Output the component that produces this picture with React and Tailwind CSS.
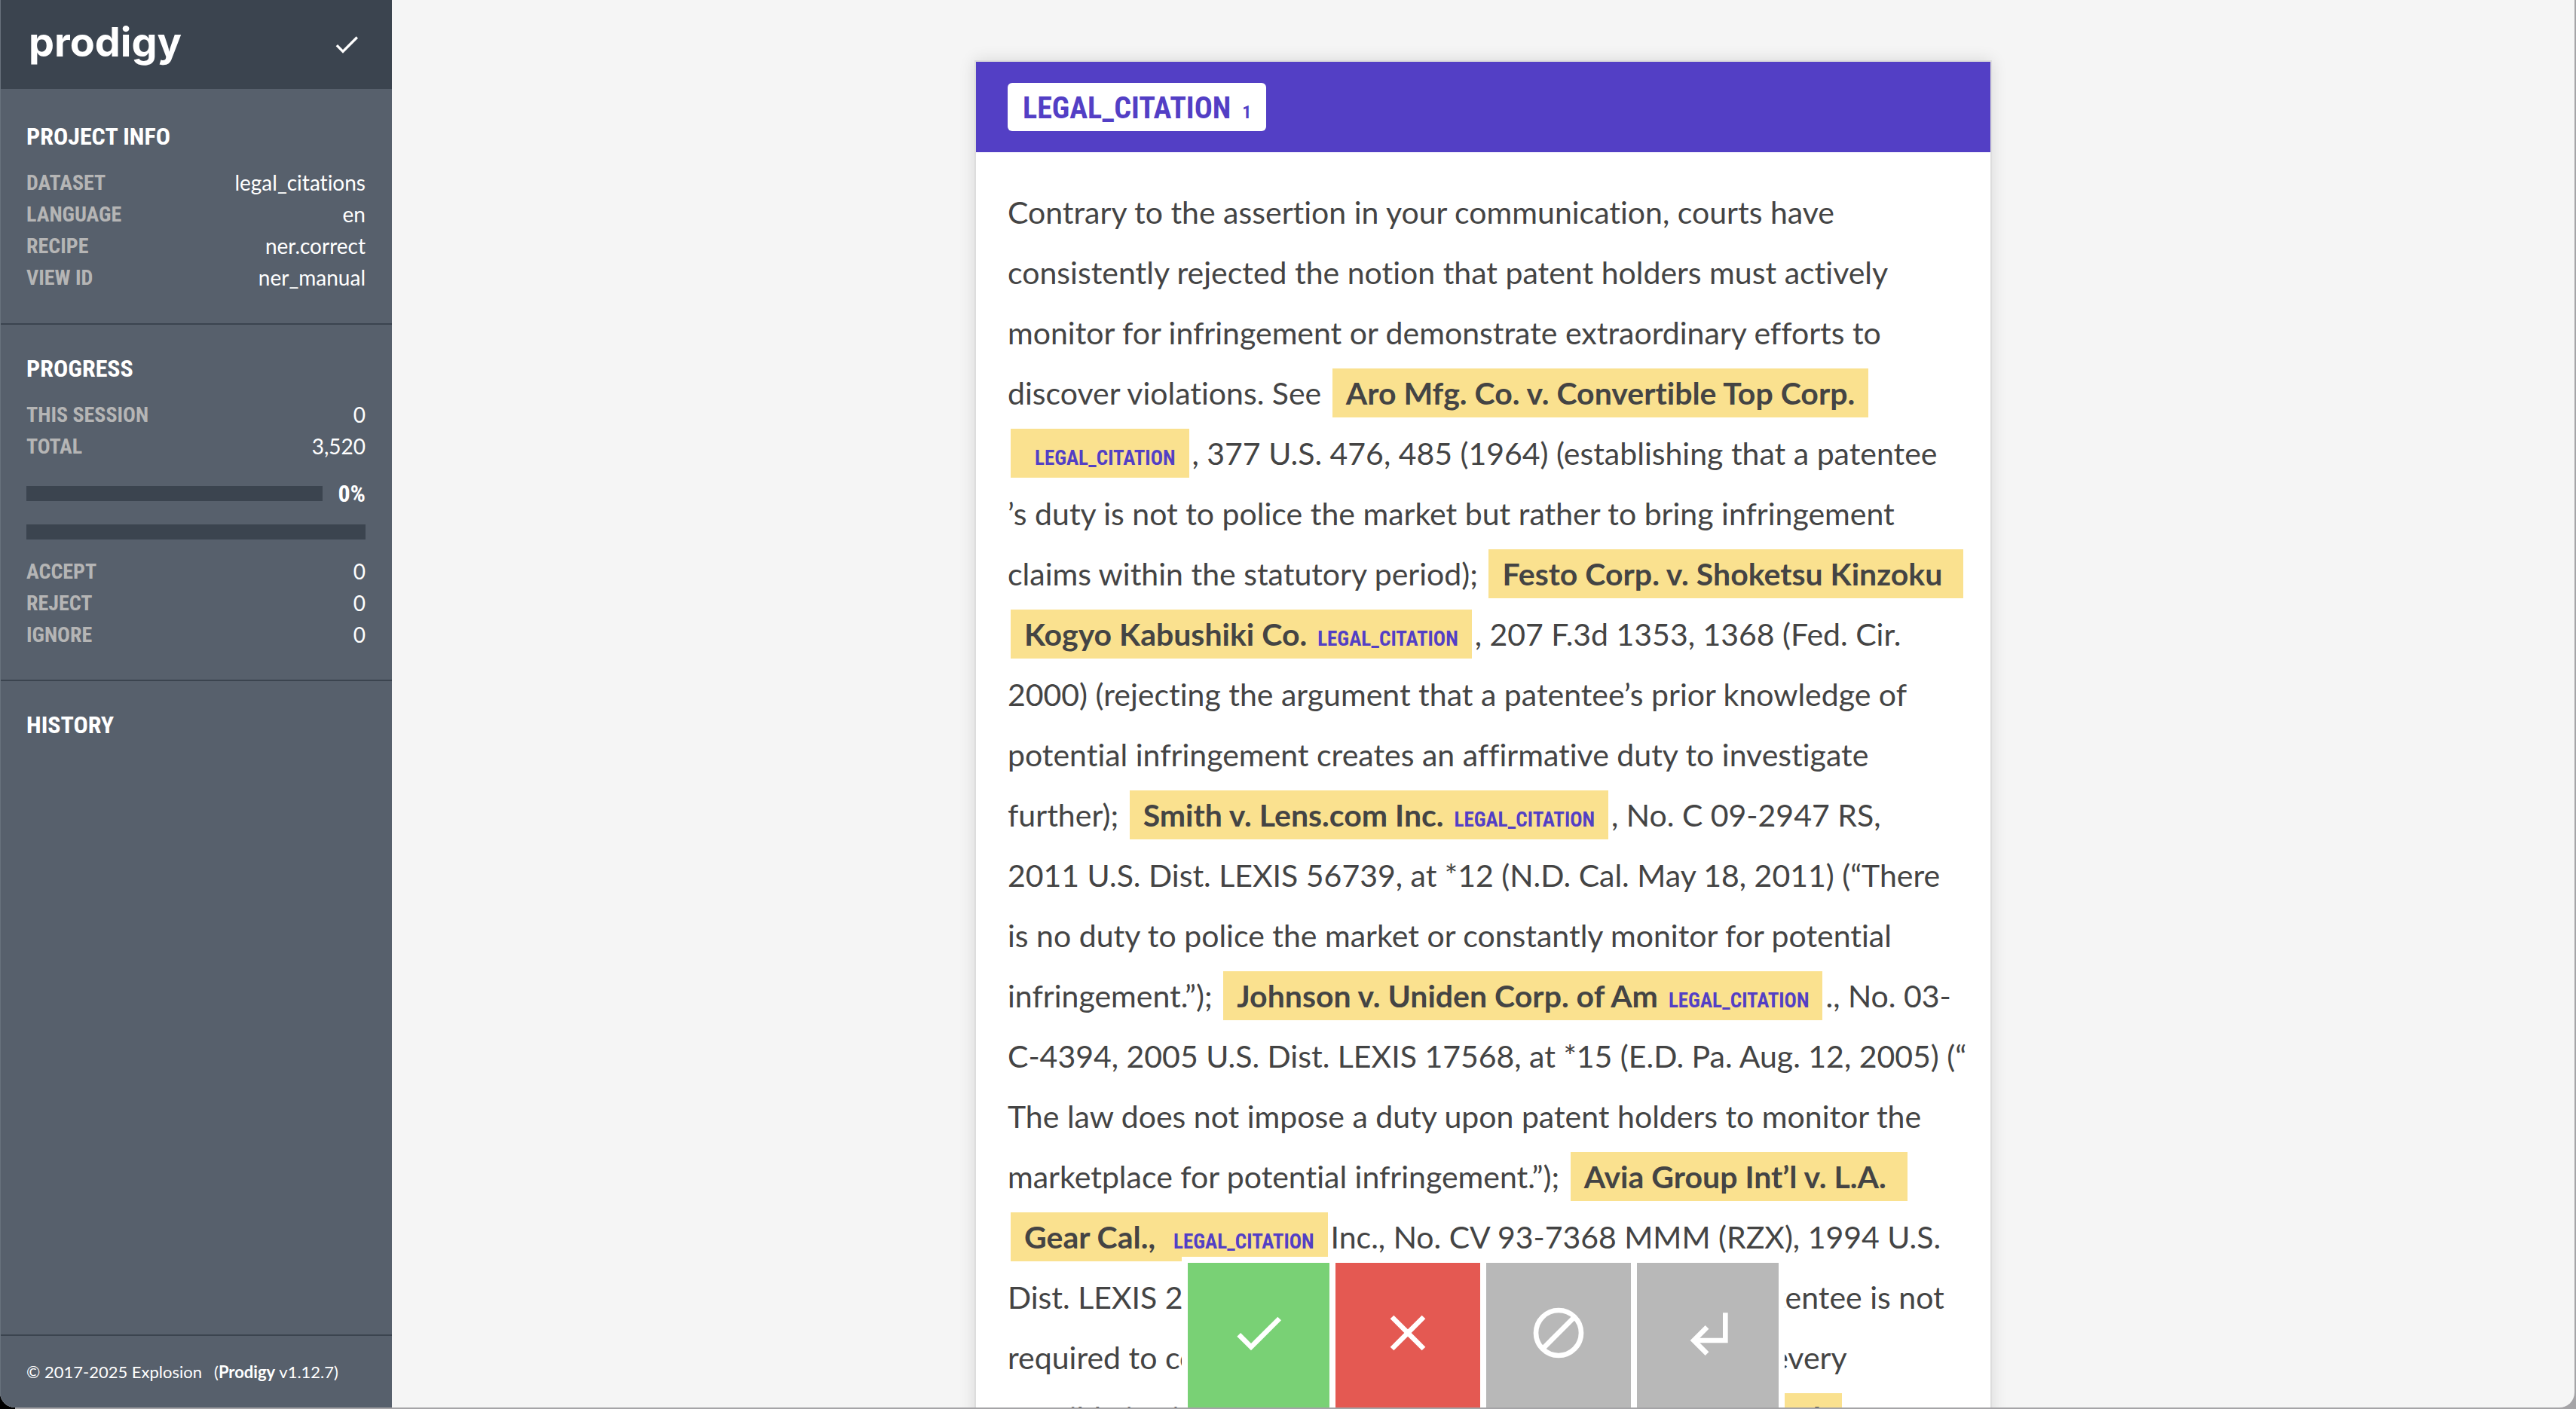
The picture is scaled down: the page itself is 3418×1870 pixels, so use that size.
const projectInfo = [
  ['Dataset', 'legal_citations'],
  ['Language', 'en'],
  ['Recipe', 'ner.correct'],
  ['View ID', 'ner_manual'],
];

const totals = [
  ['This session', '0'],
  ['Total', '3,520'],
];

const decisions = [
  ['Accept', '0'],
  ['Reject', '0'],
  ['Ignore', '0'],
];

const condensed = "font-['Roboto_Condensed','Liberation_Sans_Narrow',Roboto,sans-serif]";

function CheckIcon({ className }) {
  return (
    <svg viewBox="0 0 24 24" fill="currentColor" aria-hidden="true" className={className}>
      <path d="M9 16.17 4.83 12l-1.42 1.41L9 19 21 7l-1.41-1.41z" />
    </svg>
  );
}

function CloseIcon({ className }) {
  return (
    <svg viewBox="0 0 24 24" fill="currentColor" aria-hidden="true" className={className}>
      <path d="M19 6.41 17.59 5 12 10.59 6.41 5 5 6.41 10.59 12 5 17.59 6.41 19 12 13.41 17.59 19 19 17.59 13.41 12z" />
    </svg>
  );
}

function IgnoreIcon({ className }) {
  return (
    <svg viewBox="0 0 24 24" fill="none" stroke="currentColor" strokeWidth="2" aria-hidden="true" className={className}>
      <circle cx="12" cy="12" r="9" />
      <path d="M5.6 18.4 18.4 5.6" />
    </svg>
  );
}

function UndoIcon({ className }) {
  return (
    <svg viewBox="0 0 24 24" fill="currentColor" aria-hidden="true" className={className}>
      <path d="m11 9 1.42 1.42L8.83 14H18V4h2v12H8.83l3.59 3.58L11 21l-6-6z" />
    </svg>
  );
}

function Heading({ children }) {
  return <h2 className={`${condensed} text-[32px] leading-[42px] font-bold text-white uppercase`}>{children}</h2>;
}

function InfoTable({ rows }) {
  return (
    <table className="w-full text-[28px] leading-[42px]">
      <tbody>
        {rows.map(([label, value]) => (
          <tr key={label}>
            <th scope="row" className={`${condensed} p-0 text-left font-bold text-[#b5b5b5] uppercase`}>{label}</th>
            <td className="p-0 text-right align-top leading-[40px] text-white">{value}</td>
          </tr>
        ))}
      </tbody>
    </table>
  );
}

function Sidebar() {
  return (
    <aside className="flex w-[520px] shrink-0 flex-col border-l border-[#68727d] bg-[#57606c]">
      <header className="flex h-[118px] shrink-0 items-center justify-between bg-[#3b444f] pr-10 pl-[37px] text-white">
        <h1 className="pb-1.5 font-[Inter,sans-serif] text-[54px] leading-[64px] font-bold">prodigy</h1>
        <CheckIcon className="size-10" />
      </header>
      <section className="border-b-2 border-[#3b444f] pt-[42px] pr-[35px] pb-[39px] pl-[34px]">
        <Heading>Project Info</Heading>
        <div className="mt-5">
          <InfoTable rows={projectInfo} />
        </div>
      </section>
      <section className="border-b-2 border-[#3b444f] pt-[37px] pr-[35px] pb-[38px] pl-[34px]">
        <Heading>Progress</Heading>
        <div className="mt-5">
          <InfoTable rows={totals} />
        </div>
        <div className="mt-5 flex h-[42px] items-center justify-between gap-5">
          <div role="progressbar" aria-label="Progress" aria-valuenow={0} className="h-5 grow bg-[#3b444f]" />
          <span className={`${condensed} text-[32px] leading-[42px] font-bold text-white`}>0%</span>
        </div>
        <div className="mt-5 h-5 bg-[#3b444f]" />
        <div className="mt-[22px]">
          <InfoTable rows={decisions} />
        </div>
      </section>
      <section className="grow pt-[37px] pr-[35px] pl-[34px]">
        <Heading>History</Heading>
      </section>
      <footer className="flex h-[97px] shrink-0 items-center gap-4 border-t-2 border-[#3b444f] px-[34px] text-[22px] text-white">
        <a href="#explosion">© 2017-2025 Explosion</a>
        <span>(<strong>Prodigy</strong> v1.12.7)</span>
      </footer>
    </aside>
  );
}

function Entity({ children }) {
  return (
    <mark className="mx-1 box-decoration-clone bg-[#fae18f] px-[18px] py-2 font-bold text-[#444]">
      {children}
      <span className={`${condensed} ml-3.5 text-[27px] leading-none text-[#533fc5]`}>LEGAL_CITATION</span>
    </mark>
  );
}

function Article() {
  return (
    <p className="px-[42px] pt-10 text-[41px] leading-[80px] whitespace-nowrap text-[#444]">
      Contrary to the assertion in your communication, courts have<br />
      consistently rejected the notion that patent holders must actively<br />
      monitor for infringement or demonstrate extraordinary efforts to<br />
      discover violations. See <Entity>Aro Mfg. Co. v. Convertible Top Corp.<br /></Entity>, 377 U.S. 476, 485 (1964) (establishing that a patentee<br />
      ’s duty is not to police the market but rather to bring infringement<br />
      claims within the statutory period); <Entity>Festo Corp. v. Shoketsu Kinzoku&nbsp;<br />Kogyo Kabushiki Co.</Entity>, 207 F.3d 1353, 1368 (Fed. Cir.<br />
      2000) (rejecting the argument that a patentee’s prior knowledge of<br />
      potential infringement creates an affirmative duty to investigate<br />
      further); <Entity>Smith v. Lens.com Inc.</Entity>, No. C 09-2947 RS,<br />
      2011 U.S. Dist. LEXIS 56739, at *12 (N.D. Cal. May 18, 2011) (“There<br />
      is no duty to police the market or constantly monitor for potential<br />
      infringement.”); <Entity>Johnson v. Uniden Corp. of Am</Entity>., No. 03-<br />
      C-4394, 2005 U.S. Dist. LEXIS 17568, at *15 (E.D. Pa. Aug. 12, 2005) (“<br />
      The law does not impose a duty upon patent holders to monitor the<br />
      marketplace for potential infringement.”); <Entity>Avia Group Int’l v. L.A.&nbsp;<br />Gear Cal.,&nbsp;</Entity>Inc., No. CV 93-7368 MMM (RZX), 1994 U.S.<br />
      Dist. LEXIS 21367, at *14 (C.D. Cal. Feb. 23, 1994) (“A patentee is not<br />
      required to conduct searches of the market and uncover every<br />
      possible infringer of its patent.”); <Entity>Am. Standard Bio Medical&nbsp;<br /></Entity>
    </p>
  );
}

function Actions() {
  return (
    <div className="absolute bottom-0 left-1/2 grid h-[200px] w-[800px] -translate-x-1/2 grid-cols-[47fr_48fr_48fr_47fr] gap-2 bg-white px-2 pt-2 text-white">
      <button type="button" aria-label="Accept" className="flex items-center justify-center bg-[#79d175] pb-1.5">
        <CheckIcon className="size-20" />
      </button>
      <button type="button" aria-label="Reject" className="flex items-center justify-center bg-[#e45952] pb-1.5">
        <CloseIcon className="size-20" />
      </button>
      <button type="button" aria-label="Ignore" className="flex items-center justify-center bg-[#b8b8b8] pb-1.5">
        <IgnoreIcon className="size-20" />
      </button>
      <button type="button" aria-label="Undo" className="flex items-center justify-center bg-[#b8b8b8] pb-1.5">
        <UndoIcon className="size-20" />
      </button>
    </div>
  );
}

export default function App() {
  return (
    <div className="h-screen bg-[linear-gradient(to_right,#000_20px,#a5a4a7_20px)] pr-0.5 pb-0.5 font-[Lato,sans-serif] [font-variant-ligatures:no-common-ligatures]">
      <div className="flex h-full overflow-hidden rounded-b-[20px] bg-[#f5f5f5]">
        <Sidebar />
        <main className="relative flex grow justify-center overflow-hidden pt-20">
          <article className="w-[1350px] shrink-0 self-start border-2 border-[#ddd] bg-white pb-20 shadow-[0_0_20px_rgba(0,0,0,0.12)]">
            <div className="flex h-[120px] items-center bg-[#533fc5] px-[42px]">
              <label className={`${condensed} flex h-16 cursor-pointer items-baseline gap-[15px] rounded-md bg-white px-5 pt-0.5 text-[40px] leading-[64px] font-bold text-[#533fc5]`}>
                <input type="radio" name="entity" defaultChecked className="sr-only" />
                LEGAL_CITATION
                <span className="text-[24px]">1</span>
              </label>
            </div>
            <Article />
          </article>
          <Actions />
        </main>
      </div>
    </div>
  );
}
